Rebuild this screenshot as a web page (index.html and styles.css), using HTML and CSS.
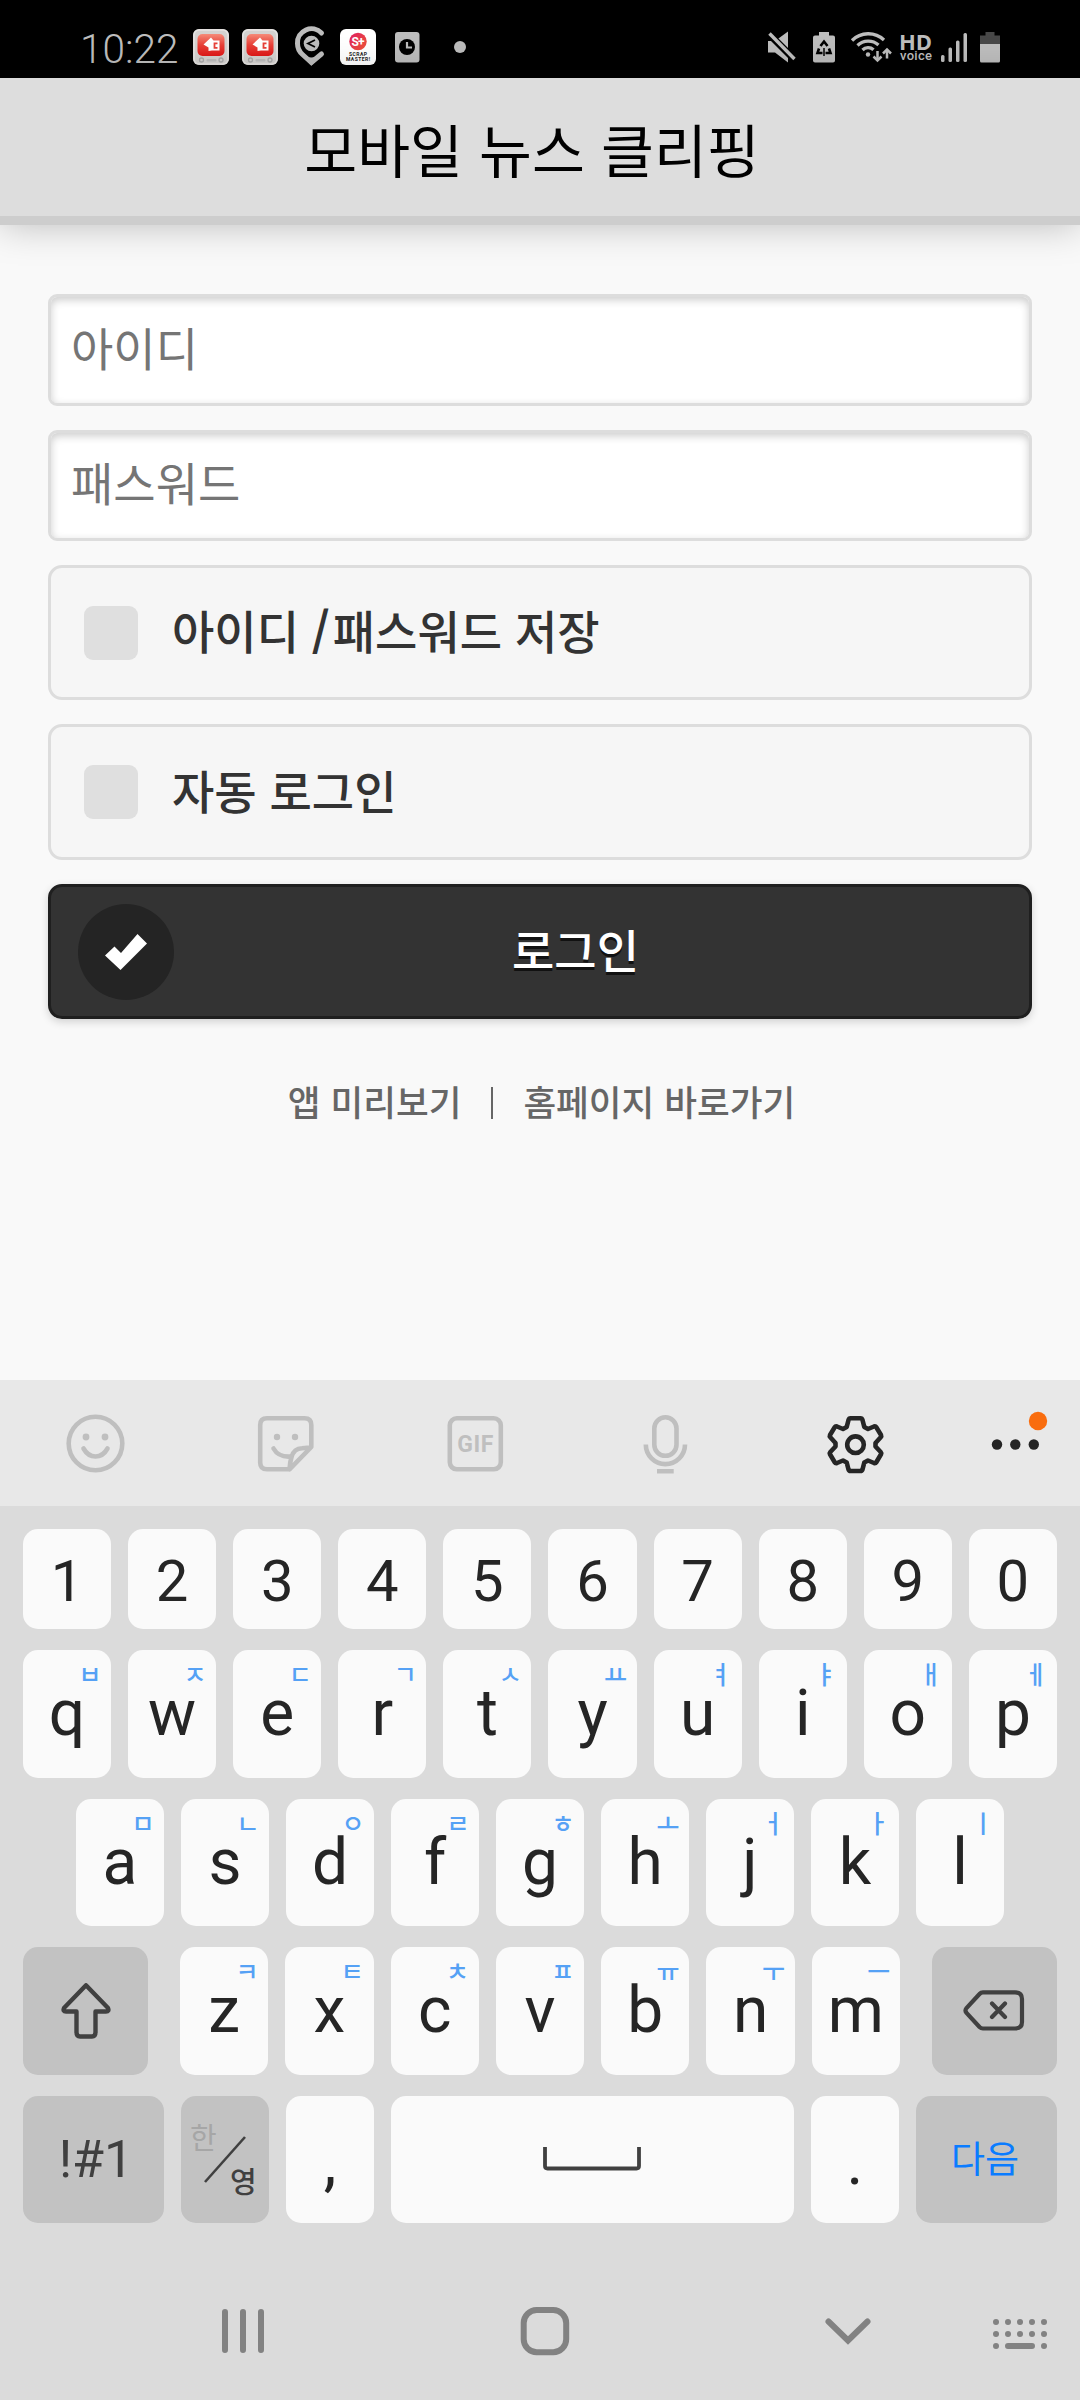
FILE: index.html
```html
<!DOCTYPE html>
<html lang="ko">
<head>
<meta charset="utf-8">
<title>모바일 뉴스 클리핑</title>
<link rel="stylesheet" href="styles.css">
</head>
<body>
<div class="status">
  <span class="clock">10:22</span>
  <svg class="status-left" width="290" height="78" viewBox="185 0 290 78">
    <defs>
      <linearGradient id="tv" x1="0" y1="0" x2="0" y2="1"><stop offset="0" stop-color="#f58a78"/><stop offset=".5" stop-color="#e84038"/><stop offset="1" stop-color="#e01818"/></linearGradient>
      <linearGradient id="scrap" x1="0" y1="0" x2="1" y2="1"><stop offset="0" stop-color="#df2060"/><stop offset="1" stop-color="#ee5535"/></linearGradient>
      <g id="tvicon">
        <rect x="0" y="0" width="36" height="36" rx="6" fill="#d4d2d0"/>
        <rect x="1" y="1" width="34" height="34" rx="5" fill="none" stroke="#e6e4e2" stroke-width="1.5"/>
        <rect x="4.500" y="5" width="27" height="22" rx="5" fill="url(#tv)"/>
        <path d="M10.500 15.500L18 8.500L20.500 11.500H26.500V21.500H19L15.500 22V18.500Z" fill="#fff"/>
        <path d="M24.500 14.300h-3v4.500h3" fill="none" stroke="#e84038" stroke-width="1.800"/>
        <circle cx="8.500" cy="31" r="2" fill="none" stroke="#aaa" stroke-width="1.300"/><circle cx="28" cy="31" r="2" fill="none" stroke="#aaa" stroke-width="1.300"/><rect x="13.500" y="30" width="10" height="2.500" rx="1" fill="#bdbdbd"/>
      </g>
    </defs>
    <use href="#tvicon" x="193" y="29"/>
    <use href="#tvicon" x="242" y="29"/>
    <path d="M321.500 33A14 14 0 0 0 297.500 43.500Q297.500 50 302.500 54.500L311.300 62.500L321.500 54" fill="none" stroke="#bdbdbd" stroke-width="5" stroke-linecap="round" stroke-linejoin="round"/>
    <path d="M301 53.500Q311 61 321.500 54L311.300 66Z" fill="#bdbdbd"/>
    <circle cx="311.500" cy="43.500" r="7.800" fill="#bdbdbd"/>
    <path d="M315 40L308 43.500L315 47" fill="none" stroke="#000" stroke-width="1.800"/>
    <rect x="340" y="29" width="36" height="36" rx="6" fill="#fff"/>
    <circle cx="358" cy="41.500" r="8.700" fill="url(#scrap)"/>
    <text x="358" y="46" class="sp" textLength="13">S+</text>
    <text x="358" y="56" class="sm" textLength="18">SCRAP</text>
    <text x="358" y="61" class="sm" textLength="24">MASTER!</text>
    <rect x="395" y="32" width="24.500" height="30.500" rx="3" fill="#bdbdbd"/><circle cx="407" cy="47" r="8" fill="#000"/><path d="M407 42v5.500h5" fill="none" stroke="#bdbdbd" stroke-width="2.200"/>
    <circle cx="460" cy="47" r="6" fill="#bdbdbd"/>
  </svg>
  <svg class="status-right" width="280" height="78" viewBox="760 0 280 78" fill="#bdbdbd">
    <path d="M768 41h7l13-9.500v31l-13-10h-7z"/><path d="M766 31l30 30" stroke="#000" stroke-width="7"/><path d="M769.500 33.500l25 25.500" stroke="#bdbdbd" stroke-width="3.400"/>
    <path d="M819 32h10v3.500h4q2 0 2 2v23q0 2-2 2h-18q-2 0-2-2v-23q0-2 2-2h4z"/>
    <g fill="none" stroke="#000" stroke-width="2.600"><path d="M820.500 46l3.500-4.500 3.500 4.500"/><path d="M819 48.500l-1.500 4.500h5"/><path d="M829 48.500l1.500 4.500h-5"/></g>
    <path d="M824 48v8" stroke="#000" stroke-width="1.500"/>
    <g fill="none" stroke="#bdbdbd" stroke-width="3.300"><path d="M852 40.500a23 23 0 0 1 32-.5"/><path d="M857.500 45.500a15.500 15.500 0 0 1 21-.5"/><path d="M862.500 50a8 8 0 0 1 11-.3"/><path d="M877.500 51v9M887 50v8.500" stroke-width="2.500"/><path d="M873.500 56.500l4 4 4-4M883 53.500l4-4 4 4" stroke-width="2.500"/></g>
    <circle cx="868" cy="54.500" r="2.200"/>
    <text x="899" y="49.500" class="hd" textLength="33">HD</text><text x="900" y="60" class="voice" textLength="32">voice</text>
    <rect x="941" y="55" width="3.500" height="7" rx="1.500"/><rect x="948.500" y="47.500" width="3.500" height="14.500" rx="1.500"/><rect x="956" y="40.500" width="3.500" height="21.500" rx="1.500"/><rect x="963.500" y="33" width="3.500" height="29" rx="1.500"/>
    <path d="M985.500 32h9v3.500h5.500v8.500h-20v-8.500h5.500z" fill="#484848"/><path d="M980 44h20v17q0 1.500-1.500 1.500h-17q-1.500 0-1.500-1.500z"/>
  </svg>
</div>
<header class="title">모바일 뉴스 클리핑</header>
<main class="login">
  <input class="field" type="text" placeholder="아이디">
  <input class="field second" type="text" placeholder="패스워드">
  <div class="check"><span class="box"></span><span class="label">아이디 <strong>/</strong>패스워드 저장</span></div>
  <div class="check auto"><span class="box"></span><span class="label">자동 로그인</span></div>
  <div class="submit"><span class="disc"><svg width="42" height="36" viewBox="0 0 42 36"><path d="M0 21.500L9.500 12.500L16 19L32.500 0L42 9.500L15.500 36Z" fill="#fff"/></svg></span><span class="submit-text">로그인</span></div>
  <div class="links"><span>앱 미리보기</span><i></i><span>홈페이지 바로가기</span></div>
</main>
<section class="keyboard">
  <svg class="tools" width="1080" height="126" viewBox="0 1380 1080 126" fill="none" stroke="#bfbfbf" stroke-width="4.600">
    <circle cx="95.500" cy="1443.500" r="26.800"/><path d="M83.500 1448.500Q88 1456.500 95.500 1456.500T107.500 1448.500" stroke-linecap="round"/>
    <g fill="#bfbfbf" stroke="none"><circle cx="86" cy="1437" r="3.400"/><circle cx="105" cy="1437" r="3.400"/><circle cx="277" cy="1437" r="3.200"/><circle cx="295" cy="1437" r="3.200"/></g>
    <path d="M288.500 1469.300H267Q260.200 1469.300 260.200 1462.500V1425Q260.200 1418.300 267 1418.300H304.500Q311.300 1418.300 311.300 1425V1447L289.500 1469.300Q290 1462 291.500 1457Q294 1448.500 302 1448.300L310 1447.500" stroke-linejoin="round"/><path d="M273.500 1448.500Q278.500 1457.500 291 1456.500" stroke-linecap="round"/>
    <rect x="449.800" y="1418.300" width="51" height="51" rx="7"/><text x="475.300" y="1451.800" class="gif" textLength="36">GIF</text>
    <rect x="654.300" y="1417.300" width="22.200" height="38.500" rx="11.100"/><path d="M645.800 1444.500a19.600 19.600 0 0 0 39.200 0M657 1471.300h16.700"/>
    <g stroke="#252525" stroke-linejoin="round"><path d="M850.500 1418.300H860.500Q862 1418.300 862.500 1420L864.300 1427L868 1429L874 1426.500Q875.500 1426 876.300 1427.300L881 1435Q881.600 1436.300 880.700 1437.300L875.500 1443V1446.500L880.700 1452Q881.600 1453 881 1454.300L876.300 1462.200Q875.500 1463.500 874 1463L868 1460.500L864.300 1462.500L862.500 1469.500Q862 1471 860.500 1471H850.500Q849 1471 848.500 1469.500L846.700 1462.500L843 1460.500L837 1463Q835.500 1463.500 834.700 1462.200L830 1454.300Q829.400 1453 830.300 1452L835.500 1446.500V1443L830.300 1437.300Q829.400 1436.300 830 1435L834.700 1427.300Q835.500 1426 837 1426.500L843 1429L846.700 1427L848.500 1420Q849 1418.300 850.500 1418.300Z"/><circle cx="855.500" cy="1444.700" r="8.300"/></g>
    <g fill="#252525" stroke="none"><circle cx="997" cy="1444.500" r="5.200"/><circle cx="1015.300" cy="1444.500" r="5.200"/><circle cx="1033.800" cy="1444.500" r="5.200"/></g><circle cx="1038" cy="1421" r="9.200" fill="#f96d0e" stroke="none"/>
  </svg>
  <div class="row numbers"><b>1</b><b>2</b><b>3</b><b>4</b><b>5</b><b>6</b><b>7</b><b>8</b><b>9</b><b>0</b></div>
  <div class="row"><b>q<i>ㅂ</i></b><b>w<i>ㅈ</i></b><b>e<i>ㄷ</i></b><b>r<i>ㄱ</i></b><b>t<i>ㅅ</i></b><b>y<i>ㅛ</i></b><b>u<i>ㅕ</i></b><b>i<i>ㅑ</i></b><b>o<i>ㅐ</i></b><b>p<i>ㅔ</i></b></div>
  <div class="row home"><b>a<i>ㅁ</i></b><b>s<i>ㄴ</i></b><b>d<i>ㅇ</i></b><b>f<i>ㄹ</i></b><b>g<i>ㅎ</i></b><b>h<i>ㅗ</i></b><b>j<i>ㅓ</i></b><b>k<i>ㅏ</i></b><b>l<i>ㅣ</i></b></div>
  <div class="row"><b class="fn shift"><svg width="50" height="56" viewBox="0 0 50 56"><path d="M25 2.300L47 25Q48.500 28.500 45 28.500H34.500V49Q34.500 53.500 31 53.500H19Q15.500 53.500 15.500 49V28.500H5Q1.500 28.500 3 25Z" fill="none" stroke="#404040" stroke-width="4.400" stroke-linejoin="round"/></svg></b><b>z<i>ㅋ</i></b><b>x<i>ㅌ</i></b><b>c<i>ㅊ</i></b><b>v<i>ㅍ</i></b><b>b<i>ㅠ</i></b><b>n<i>ㅜ</i></b><b>m<i>ㅡ</i></b><b class="fn back"><svg width="62" height="41" viewBox="0 0 62 41"><path d="M20 2.300H52Q59 2.300 59 9V32Q59 38.500 52 38.500H20Q18 38.500 16.500 37L3.500 23Q1.500 20.500 3.500 18L16.500 4Q18 2.300 20 2.300ZM29 13.500L42 27M42 13.500L29 27" fill="none" stroke="#404040" stroke-width="4.200" stroke-linecap="round"/></svg></b></div>
  <div class="row"><b class="fn sym">!#1</b><b class="fn lang"><span class="han">한</span><svg width="42" height="47" viewBox="0 0 42 47"><path d="M1 46L41 1" stroke="#404040" stroke-width="2.600"/></svg><span class="eng">영</span></b><b class="punct">,</b><b class="space"><svg width="98" height="24" viewBox="0 0 98 24"><path d="M2 0V19Q2 21.500 4.500 21.500H93.500Q96 21.500 96 19V0" fill="none" stroke="#404040" stroke-width="3.800"/></svg></b><b class="punct">.</b><b class="fn next">다음</b></div>
  <svg class="nav" width="1080" height="100" viewBox="0 2280 1080 100" fill="none" stroke="#828282" stroke-width="6" stroke-linecap="round">
    <path d="M225 2312v38M243 2312v38M261 2312v38"/><rect x="523.700" y="2310" width="42.500" height="42.300" rx="13"/><path d="M828.500 2321.500L848 2340.500L867.500 2321.500"/>
    <path d="M996 2322h.01M1008 2322h.01M1020 2322h.01M1032 2322h.01M1044 2322h.01M996 2334h.01M1008 2334h.01M1020 2334h.01M1032 2334h.01M1044 2334h.01M996 2346h.01M1008 2346h24M1044 2346h.01"/>
  </svg>
</section>
</body>
</html>
```
FILE: styles.css
```css
* { box-sizing: border-box; }
body { margin: 0; width: 1080px; height: 2400px; display: flex; flex-direction: column; background: #f9f9f9; font-family: "Noto Sans CJK KR", sans-serif; overflow: hidden; }
i, b { font-style: normal; font-weight: 400; }
svg { display: block; }
text { stroke: none; }

.status { height: 78px; flex: none; background: #000; display: flex; padding: 0 40px 0 80px; }
.clock { width: 105px; font: 350 40.5px/98px Roboto, sans-serif; color: #bdbdbd; }
.status-right { margin-left: auto; }
.sp { font: 700 12px Roboto, sans-serif; fill: #fff; text-anchor: middle; }
.sm { font: 700 5px Roboto, sans-serif; fill: #222; text-anchor: middle; }
.hd { font: 700 22px "Open Sans", sans-serif; }
.voice { font: 500 13px Roboto, sans-serif; }

.title { height: 147px; flex: none; padding-right: 16px; background: #ddd; border-bottom: 9px solid #cdcdcd; box-shadow: 0 0 36px rgba(0, 0, 0, .25); text-align: center; font-size: 57.5px; line-height: 141px; color: #000; }

.login { height: 1155px; flex: none; padding: 69px 48px 0; display: flex; flex-direction: column; gap: 24px; }
.field { height: 112px; width: 984px; flex: none; border: 3px solid #ddd; border-radius: 9px; padding: 0 20px 9px 20px; background: #fff; box-shadow: inset 0 3px 9px rgba(0, 0, 0, .2); font: 400 46px "Noto Sans CJK KR", sans-serif; }
.field::placeholder { color: #757575; opacity: 1; }
.second { height: 111px; }
.check { height: 135px; flex: none; border: 3px solid #ddd; border-radius: 14px; background: #f6f6f6; display: flex; align-items: center; padding: 0 0 0 33px; gap: 34px; font-size: 46px; font-weight: 500; color: #333; }
.auto { height: 136px; }
.label { padding-bottom: 7px; }
.label strong { font-weight: 700; padding-right: 3px; }
.box { width: 54px; height: 54px; border-radius: 9px; background: #dfdfdf; }
.submit { height: 135px; flex: none; border: 3px solid #1f1f1f; border-radius: 14px; background: #333; box-shadow: 0 3px 9px rgba(0, 0, 0, .16); display: flex; align-items: center; padding-left: 27px; color: #fff; font-size: 46px; font-weight: 500; text-shadow: 0 3px 0 #111; }
.disc { width: 96px; height: 96px; border-radius: 50%; background: #242424; display: flex; align-items: center; justify-content: center; }
.submit-text { margin-left: 338px; padding-bottom: 8px; }
.links { display: flex; justify-content: center; align-items: center; padding: 32px 0 0 3px; font-size: 35.6px; font-weight: 450; line-height: 52px; color: #666; }
.links i { width: 2px; height: 32px; margin: 4px 30px 0; background: #666; }

.keyboard { flex: 1; background: #dbdbdb; display: flex; flex-direction: column; font-family: Roboto, "Noto Sans CJK KR", sans-serif; color: #252525; }
.tools { background: #e8e8e8; margin-bottom: 23px; }
.gif { font: 700 23px Roboto, sans-serif; fill: #bfbfbf; text-anchor: middle; }
.row { display: flex; gap: 17px; margin: 0 23px 21px; height: 127.600px; font-size: 64px; line-height: 127px; }
.row > b { position: relative; flex: 1 0 0; border-radius: 15px; background: #fafafa; text-align: center; }
.numbers { height: 100px; font-size: 58px; line-height: 105px; }
.home { margin: 0 76px 21px; }
.row i { position: absolute; left: 47px; width: 40px; top: 7px; font: 500 25px/32px "Noto Sans CJK KR", sans-serif; color: #55a1f5; }
.row > .fn { background: #c2c2c2; color: #404040; display: flex; align-items: center; justify-content: center; }
.row > .shift { flex: 0 0 125px; margin-right: 15px; }
.row > .back { flex: 0 0 125px; margin-left: 15px; }
.row > .sym, .row > .next { flex: 0 0 141px; }
.row > .sym { font-size: 52px; padding-left: 5px; }
.row > .next { font: 400 37px "Noto Sans CJK KR", sans-serif; color: #0a7cff; padding: 0 3px 5px 0; }
.row > .space { flex: 0 0 403px; display: flex; align-items: center; justify-content: center; padding: 0 2px 2px 0; }
.row > .punct { line-height: 134px; }
.lang span { position: absolute; font: 400 29px/40px "Noto Sans CJK KR", sans-serif; }
.han { left: 9px; top: 20px; color: #a6a6a6; }
.lang .eng { left: 49px; top: 64px; font-weight: 500; }
.nav { margin-top: 36px; }
```
